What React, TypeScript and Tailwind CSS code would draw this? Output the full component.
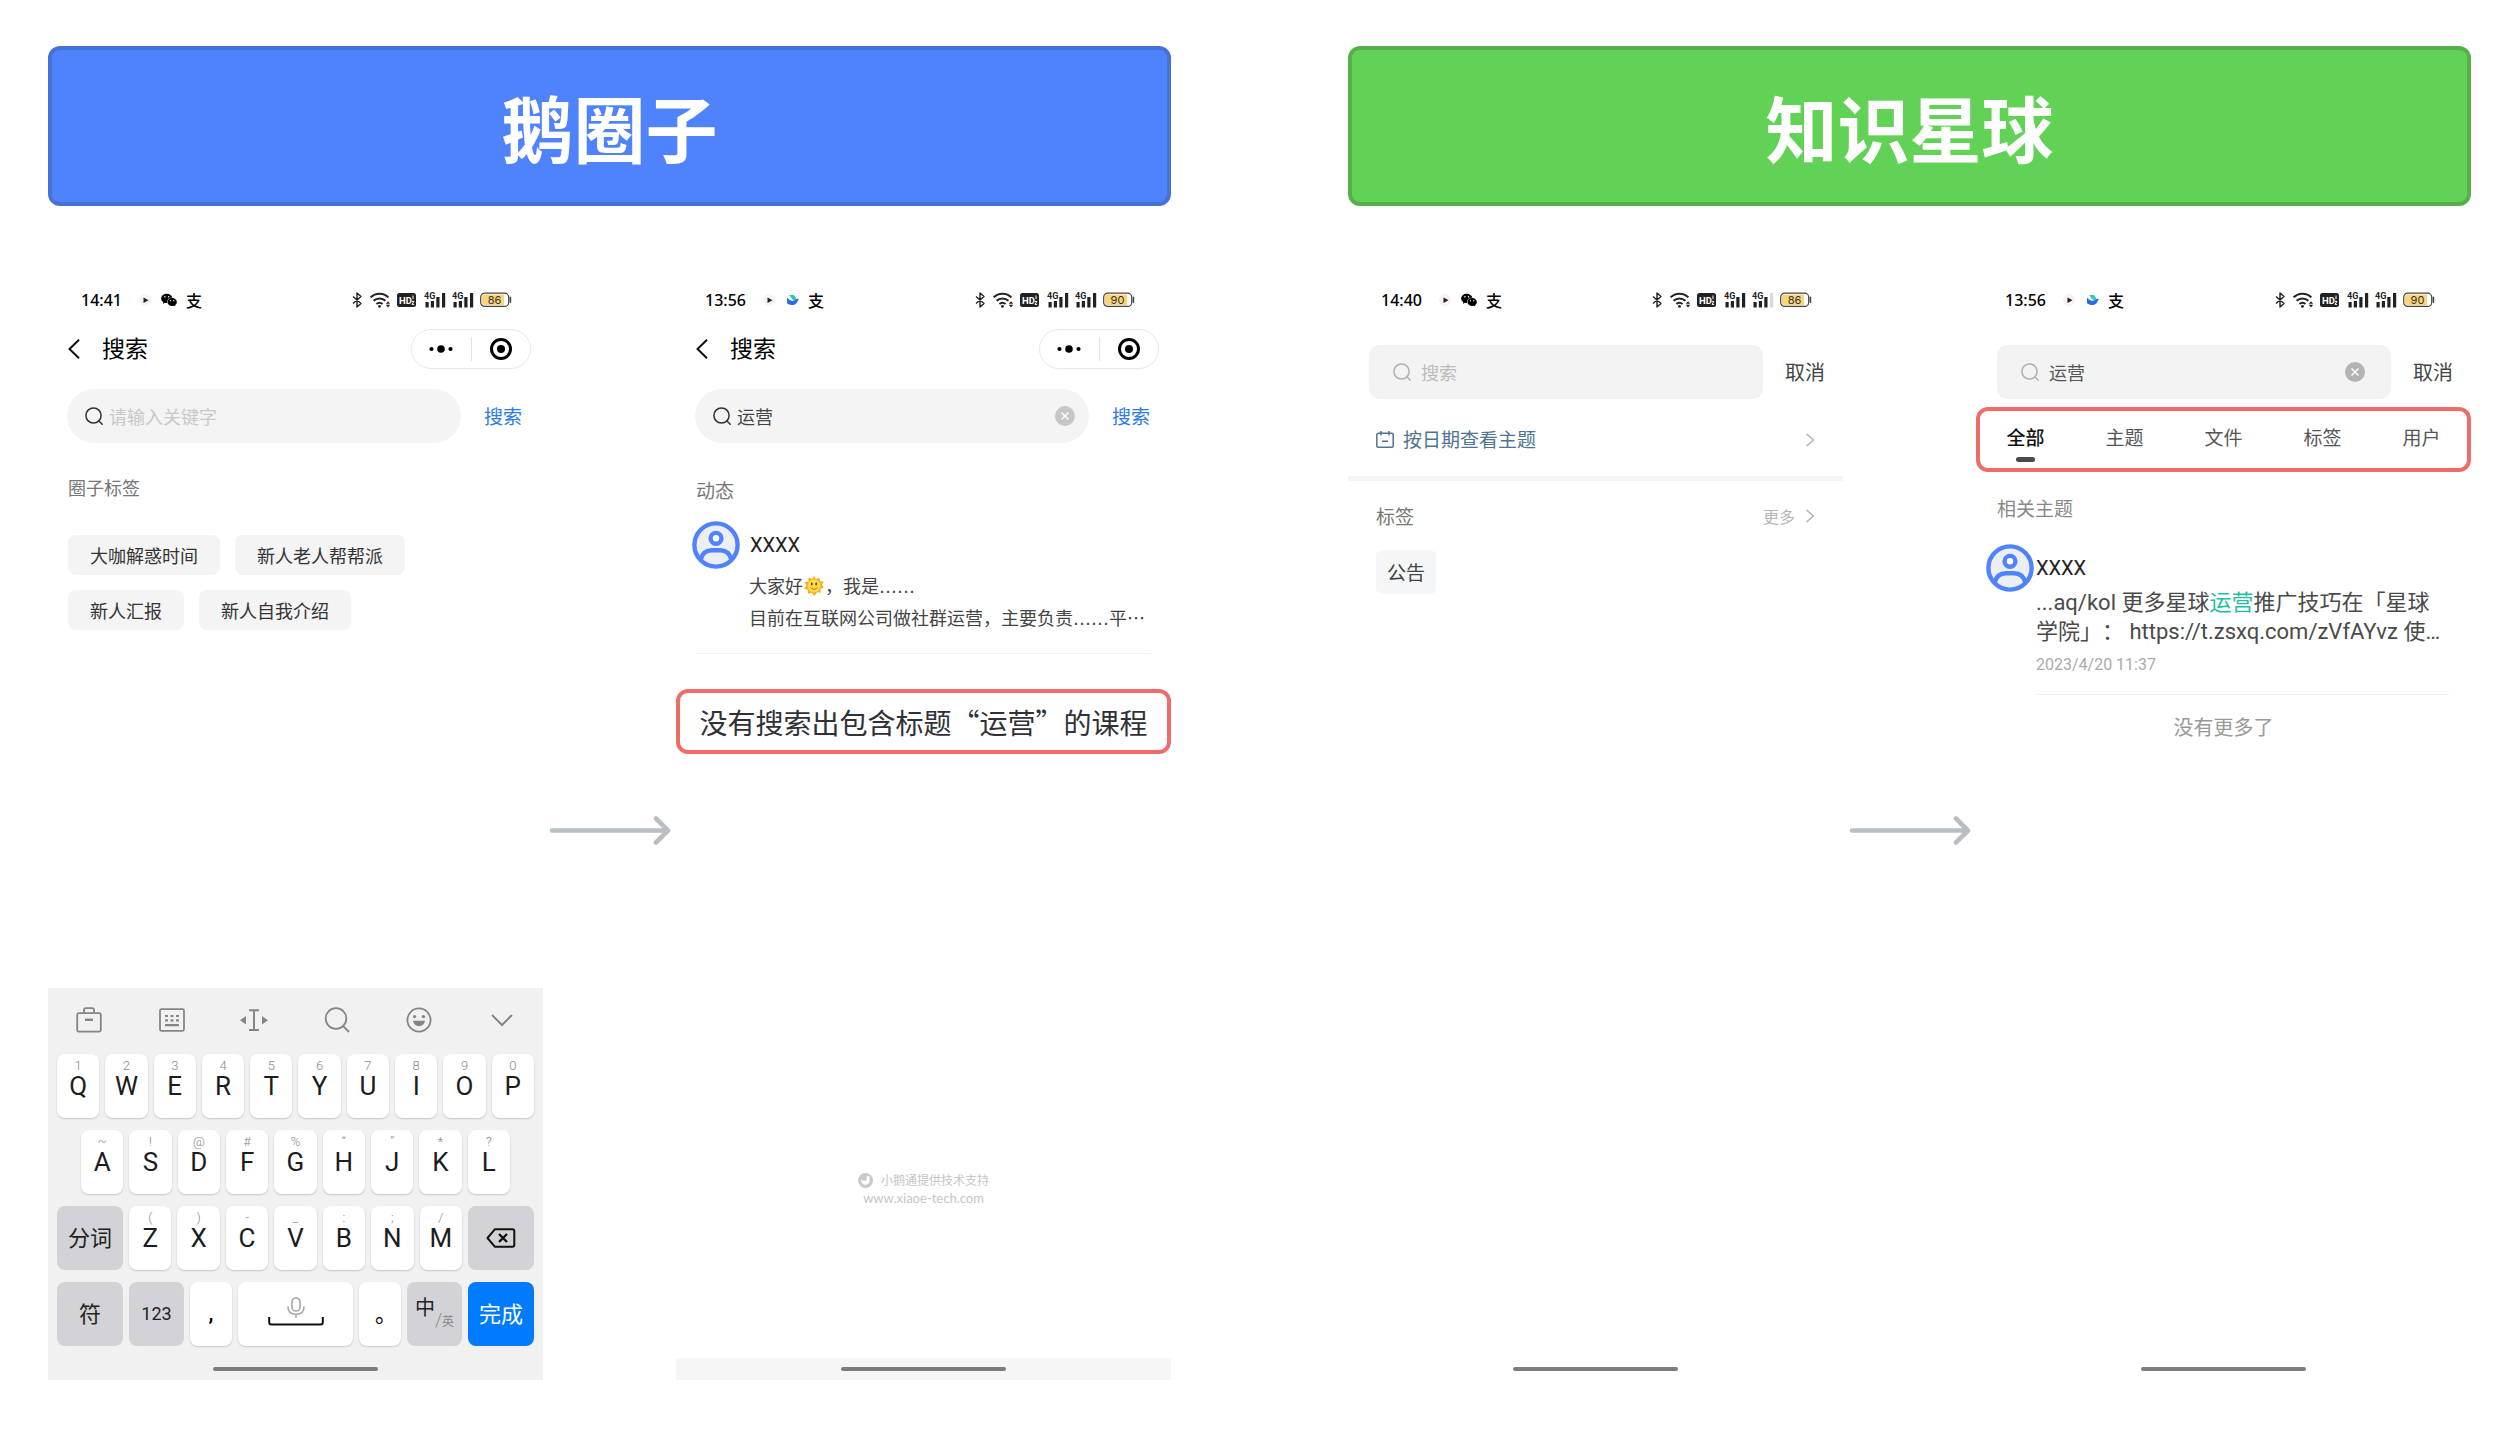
import type { ReactNode } from "react";
import { AiFillWechat } from "react-icons/ai";

/* ---------- Ikon status bar ---------- */

function Bluetooth() {
    return (
        <svg width="10" height="16" viewBox="0 0 10 16" fill="none" stroke="#222" strokeWidth="1.4" strokeLinejoin="round" aria-hidden="true">
            <path d="M1 4.5l8 7-4 3.5V1l4 3.5-8 7" />
        </svg>
    );
}

function Wifi() {
    return (
        <svg width="21" height="16" viewBox="0 0 21 16" fill="none" stroke="#222" strokeWidth="2" aria-hidden="true">
            <path d="M0.600 5.400a12.400 12.400 0 0 1 17.800 0" />
            <path d="M3.600 8.800a8.400 8.400 0 0 1 11.800 0" />
            <path d="M6.400 12a4.800 4.800 0 0 1 6.200 0" />
            <circle cx="9.500" cy="14.400" r="1.400" fill="#222" stroke="none" />
            <path d="M18 9.200l2.200 2.600h-4.400zM18 15.400l2.200-2.600h-4.400z" fill="#222" stroke="none" />
        </svg>
    );
}

function HdBadge() {
    return (
        <svg width="19" height="14" viewBox="0 0 19 14" aria-hidden="true">
            <rect width="19" height="14" rx="2.5" fill="#222" />
            <text x="2" y="10.6" fontSize="9.500" fontWeight="700" fill="#fff" fontFamily="Roboto, sans-serif">HD</text>
            <path d="M16 2.500v3.600M15 8.400h2l-2 3h2.200" stroke="#fff" strokeWidth="1" fill="none" />
        </svg>
    );
}

function Signal({ weak = false }: { weak?: boolean }) {
    return (
        <svg width="22" height="16" viewBox="0 0 22 16" fill="#222" aria-hidden="true">
            <text x="0" y="7.400" fontSize="9" fontWeight="700" fontFamily="Roboto, sans-serif">4G</text>
            <rect x="1.500" y="10" width="3.200" height="5.500" />
            <rect x="6.800" y="9" width="3.200" height="6.500" />
            <rect x="12.300" y="5" width="3.200" height="10.500" />
            <rect x="18" y="1" width="3.200" height="14.500" fill={weak ? "#d9d9d9" : "#222"} />
        </svg>
    );
}

function Battery({ level }: { level: string }) {
    return (
        <svg width="32" height="16" viewBox="0 0 32 16" aria-label={`${level}%`}>
            <rect x="0.7" y="1.2" width="28" height="13.2" rx="4" fill="#fff" stroke="#444" strokeWidth="1.2" />
            <path d="M5 2.6h19v10.4H5a3 3 0 0 1-3-3V5.600a3 3 0 0 1 3-3z" fill="#fbd479" />
            <path d="M30.4 5.400v4.800" stroke="#444" strokeWidth="1.600" strokeLinecap="round" />
            <text x="14.500" y="12" fontSize="11" textAnchor="middle" fill="#333" fontFamily="Inter, sans-serif">{level}</text>
        </svg>
    );
}

function BirdApp() {
    return (
        <svg width="14" height="14" viewBox="0 0 14 14" aria-hidden="true">
            <path d="M3 2h4.500c1.500 1 2.300 2.300 2.800 4L7.800 8z" fill="#2fc9b4" />
            <path d="M1 4.500C3 7 5.500 8.300 8 7.800c1.500-1.800 3.200-2.400 5-1.800-1 1-1.300 2.500-2.200 3.800C8.600 13 4 12.600 1 10.300z" fill="#2a6be8" />
        </svg>
    );
}

type StatusProps = { time: string; level: string; app: "wechat" | "bird"; weak?: boolean };

function StatusBar({ time, level, app, weak }: StatusProps) {
    return (
        <div className={`flex h-10 items-center justify-between ${app === "wechat" ? "pl-[33px] pr-[31px]" : "pl-[29px] pr-9"}`}>
            <div className="flex items-center">
                <span className="text-base font-medium text-black [font-family:'Noto_Sans',sans-serif]">{time}</span>
                <svg className="ml-4" width="14" height="14" viewBox="0 0 14 14" aria-hidden="true">
                    <circle cx="7" cy="7" r="6" fill="#fbf1f3" />
                    <path d="M5.500 4.500l5 2.800-5 2.700z" fill="#222" />
                </svg>
                {app === "wechat" ? (
                    <AiFillWechat className="ml-2 size-[18px] text-black" />
                ) : (
                    <span className="ml-[10px]"><BirdApp /></span>
                )}
                <span className="ml-2 text-base leading-4 font-medium text-black">支</span>
            </div>
            <div className="flex items-center">
                <Bluetooth />
                <span className="ml-2"><Wifi /></span>
                <span className="ml-[6px]"><HdBadge /></span>
                <span className="ml-2"><Signal /></span>
                <span className="ml-[6px]"><Signal weak={weak} /></span>
                <span className="ml-[6px]"><Battery level={level} /></span>
            </div>
        </div>
    );
}

/* ---------- Ikon umum ---------- */

function SearchIcon({ className, size = 18 }: { className?: string; size?: number }) {
    return (
        <svg className={className} width={size} height={size} viewBox="0 0 18 18" fill="none" stroke="currentColor" strokeWidth="1.500" strokeLinecap="round" aria-hidden="true">
            <circle cx="8.500" cy="8.500" r="7.600" />
            <path d="M14 14l3.200 3.200" />
        </svg>
    );
}

function Chevron() {
    return (
        <svg width="10" height="14" viewBox="0 0 10 14" fill="none" stroke="#b5b5b5" strokeWidth="1.600" aria-hidden="true">
            <path d="M1.500 1l7 6-7 6" />
        </svg>
    );
}

function ClearButton({ className }: { className: string }) {
    return (
        <button type="button" aria-label="清除" className={`shrink-0 ${className}`}>
            <svg width="20" height="20" viewBox="0 0 20 20" aria-hidden="true">
                <circle cx="10" cy="10" r="10" fill="currentColor" />
                <path d="M6.500 6.500l7 7M13.500 6.500l-7 7" stroke="#fff" strokeWidth="1.400" />
            </svg>
        </button>
    );
}

function Avatar() {
    return (
        <svg className="shrink-0" width="48" height="48" viewBox="0 0 48 48" fill="none" stroke="#4f83fe" strokeWidth="4.400" aria-hidden="true">
            <circle cx="24" cy="24" r="21.600" fill="#eceef4" />
            <circle cx="24" cy="17.300" r="5.400" fill="#fff" />
            <path d="M8.500 39C10 32.500 14 29.200 20 29.200h8c6 0 10 3.300 11.500 9.800" />
        </svg>
    );
}

function SunFace() {
    return (
        <svg className="mx-px inline-block align-[-3px]" width="20" height="20" viewBox="0 0 20 20" aria-label="太阳">
            <path d="M10 0l2 3.200L15.500 1.600 16 5.300l3.800.2-2 3.200L20 11.300l-3.500 1.600.2 3.800-3.600-.5L10.500 20l-2.700-3.200-3.700 1-.2-3.800L0 12.400l2.400-2.900L.6 6.100l3.700-.7.2-3.800L8 3z" fill="#f6b022" />
            <circle cx="10" cy="9.800" r="6.400" fill="#fddc4b" />
            <ellipse cx="7.800" cy="8" rx="0.900" ry="1.400" fill="#5a3a10" />
            <ellipse cx="12.200" cy="8" rx="0.900" ry="1.400" fill="#5a3a10" />
            <path d="M6.500 11.500c1.800 2.200 5.200 2.200 7 0" stroke="#b5701a" strokeWidth="1" fill="none" />
        </svg>
    );
}

/* ---------- Bagian layar ---------- */

function Phone({ children }: { children: ReactNode }) {
    return <section className="flex aspect-[9/20] min-w-0 flex-1 flex-col">{children}</section>;
}

function HomeIndicator({ className = "" }: { className?: string }) {
    return (
        <div className={`flex justify-center py-[9px] ${className}`}>
            <span className="h-1 w-1/3 rounded-full bg-[#7d7d7d]" />
        </div>
    );
}

function MiniProgramNav() {
    return (
        <div className="flex h-[58px] items-center pr-3 pl-5">
            <button type="button" aria-label="返回" className="w-[34px]">
                <svg width="12" height="20" viewBox="0 0 12 20" fill="none" stroke="#111" strokeWidth="2" aria-hidden="true">
                    <path d="M11 0.700L1.500 10l9.500 9.300" />
                </svg>
            </button>
            <h2 className="flex-1 pb-[3px] text-[23px] text-black">搜索</h2>
            <div className="flex h-10 w-[120px] items-center rounded-full border border-[#e8e8e8]">
                <button type="button" aria-label="更多" className="flex flex-1 justify-center">
                    <svg width="24" height="8" viewBox="0 0 24 8" aria-hidden="true">
                        <circle cx="2.500" cy="4" r="2.100" />
                        <circle cx="12" cy="4" r="3.800" />
                        <circle cx="21.500" cy="4" r="2.100" />
                    </svg>
                </button>
                <span className="h-6 w-px bg-[#e2e2e2]" />
                <button type="button" aria-label="关闭" className="flex flex-1 justify-center">
                    <svg width="22" height="22" viewBox="0 0 22 22" aria-hidden="true">
                        <circle cx="11" cy="11" r="9.500" fill="none" stroke="#000" strokeWidth="3" />
                        <circle cx="11" cy="11" r="4" />
                    </svg>
                </button>
            </div>
        </div>
    );
}

function GooseSearch({ value }: { value?: string }) {
    return (
        <div className="mt-[11px] flex items-center pr-[21px] pl-[19px]">
            <label className="flex h-[54px] min-w-0 flex-1 items-center rounded-full bg-[#f4f4f4] pr-[14px] pl-[18px]">
                <SearchIcon className="shrink-0 text-[#333]" />
                <input
                    type="text"
                    aria-label="搜索关键字"
                    defaultValue={value}
                    placeholder="请输入关键字"
                    className="ml-[6px] min-w-0 flex-1 bg-transparent text-lg text-[#444] outline-none placeholder:text-[#c8c8c8]"
                />
                {value && <ClearButton className="text-[#c6c6c6]" />}
            </label>
            <button type="button" className="ml-[23px] text-[19px] text-[#2e7be6]">搜索</button>
        </div>
    );
}

function PlanetSearch({ value }: { value?: string }) {
    return (
        <div className="mt-[25px] flex items-center pr-[18px] pl-[21px]">
            <label className="flex h-[54px] min-w-0 flex-1 items-center rounded-[10px] bg-[#f3f3f3] pr-[26px] pl-6">
                <SearchIcon className="shrink-0 text-[#b0b0b0]" />
                <input
                    type="text"
                    aria-label="搜索"
                    defaultValue={value}
                    placeholder="搜索"
                    className="ml-[10px] min-w-0 flex-1 bg-transparent text-lg text-[#555] outline-none placeholder:text-[#bbb]"
                />
                {value && <ClearButton className="text-[#b3b3b3]" />}
            </label>
            <button type="button" className="ml-[22px] text-xl text-[#444]">取消</button>
        </div>
    );
}

/* ---------- Keyboard ---------- */

const row1 = [["Q", "1"], ["W", "2"], ["E", "3"], ["R", "4"], ["T", "5"], ["Y", "6"], ["U", "7"], ["I", "8"], ["O", "9"], ["P", "0"]];
const row2 = [["A", "~"], ["S", "!"], ["D", "@"], ["F", "#"], ["G", "%"], ["H", "“"], ["J", "”"], ["K", "*"], ["L", "?"]];
const row3 = [["Z", "("], ["X", ")"], ["C", "-"], ["V", "_"], ["B", ":"], ["N", ";"], ["M", "/"]];

const white = "rounded-lg bg-white shadow-[0_1px_2px_rgba(0,0,0,0.18)]";
const gray = "rounded-lg bg-[#d2d2d7] text-[#222]";

function LetterKey({ letter, hint }: { letter: string; hint: string }) {
    return (
        <button type="button" className={`relative h-16 min-w-0 flex-1 text-[26px] text-[#1c1c1c] ${white}`}>
            <span className="absolute inset-x-0 top-1 text-[13px] leading-4 font-light text-[#888]">{hint}</span>
            {letter}
        </button>
    );
}

function Keyboard() {
    return (
        <div className="mt-auto bg-[#f1f1f1] [font-family:Roboto,'Noto_Sans_CJK_SC',sans-serif]">
            <div className="grid h-[66px] grid-cols-6 place-items-center pb-[2px] text-[#858585]">
                <button type="button" aria-label="剪贴板">
                    <svg width="26" height="26" viewBox="0 0 26 26" fill="none" stroke="currentColor" strokeWidth="1.800" aria-hidden="true">
                        <rect x="1.200" y="6.200" width="23.600" height="18.400" rx="1.500" />
                        <path d="M8 6V3.200C8 2 8.800 1.200 10 1.200h6c1.200 0 2 .8 2 2V6" />
                        <path d="M9 12.800h8" strokeWidth="2.400" />
                    </svg>
                </button>
                <button type="button" aria-label="键盘">
                    <svg width="26" height="26" viewBox="0 0 26 26" fill="none" stroke="currentColor" strokeWidth="1.800" aria-hidden="true">
                        <rect x="1" y="2.200" width="24" height="21.600" rx="1.500" />
                        <path d="M6 9h3M11.500 9h3M17 9h3M6 13.400h3M11.500 13.400h3M17 13.400h3M6 18.200h14" strokeWidth="2.200" />
                    </svg>
                </button>
                <button type="button" aria-label="光标">
                    <svg width="30" height="26" viewBox="0 0 30 26" fill="none" stroke="currentColor" strokeWidth="2" aria-hidden="true">
                        <path d="M10 3.200h10M15 3v20M10 23h10" />
                        <path d="M7 9v8.500L1 13.200zM23 9v8.500l6-4.300z" fill="currentColor" stroke="none" />
                    </svg>
                </button>
                <button type="button" aria-label="查找">
                    <svg width="26" height="26" viewBox="0 0 26 26" fill="none" stroke="currentColor" strokeWidth="1.800" aria-hidden="true">
                        <circle cx="12" cy="11.500" r="10.300" />
                        <path d="M18.600 18.600l6.400 6.400" />
                    </svg>
                </button>
                <button type="button" aria-label="表情">
                    <svg width="26" height="26" viewBox="0 0 26 26" fill="none" stroke="currentColor" strokeWidth="1.800" aria-hidden="true">
                        <circle cx="13" cy="13" r="11.600" />
                        <circle cx="8.600" cy="9.600" r="1.700" fill="currentColor" stroke="none" />
                        <circle cx="17.400" cy="9.600" r="1.700" fill="currentColor" stroke="none" />
                        <path d="M7 13.800h12c-.5 3.400-2.800 5.400-6 5.400s-5.500-2-6-5.400z" fill="currentColor" stroke="none" />
                    </svg>
                </button>
                <button type="button" aria-label="收起键盘">
                    <svg width="22" height="14" viewBox="0 0 22 14" fill="none" stroke="currentColor" strokeWidth="2" aria-hidden="true">
                        <path d="M1 2l10 10L21 2" />
                    </svg>
                </button>
            </div>

            <div className="flex flex-col gap-3">
                <div className="flex gap-[6px] px-[9px]">
                    {row1.map(([letter, hint]) => <LetterKey key={letter} letter={letter} hint={hint} />)}
                </div>
                <div className="flex gap-[6px] px-[33px]">
                    {row2.map(([letter, hint]) => <LetterKey key={letter} letter={letter} hint={hint} />)}
                </div>
                <div className="flex gap-[6px] px-[9px]">
                    <button type="button" className={`h-16 w-[66px] text-[22px] ${gray}`}>分词</button>
                    {row3.map(([letter, hint]) => <LetterKey key={letter} letter={letter} hint={hint} />)}
                    <button type="button" aria-label="删除" className={`flex h-16 w-[66px] items-center justify-center ${gray}`}>
                        <svg width="30" height="20" viewBox="0 0 30 20" fill="none" stroke="#111" strokeWidth="2" strokeLinejoin="round" aria-hidden="true">
                            <path d="M9 1.200h17.500c1.200 0 1.800.6 1.800 1.800v14c0 1.200-.6 1.800-1.800 1.800H9L1.500 10z" />
                            <path d="M13 6l8 8M21 6l-8 8" strokeWidth="2.400" />
                        </svg>
                    </button>
                </div>
                <div className="flex gap-[6px] px-[9px]">
                    <button type="button" className={`h-16 w-[66px] text-[22px] ${gray}`}>符</button>
                    <button type="button" className={`h-16 w-[55px] text-lg ${gray}`}>123</button>
                    <button type="button" className={`h-16 w-[42px] pb-px text-[22px] font-medium ${white}`}>,</button>
                    <button type="button" aria-label="空格" className={`flex h-16 flex-1 items-center justify-center pb-1 ${white}`}>
                        <svg width="56" height="30" viewBox="0 0 56 30" fill="none" aria-hidden="true">
                            <g stroke="#a6a6a6" strokeWidth="1.600">
                                <rect x="24" y="1" width="8" height="13" rx="4" />
                                <path d="M20 9.500c0 5 3.200 7.700 8 7.700s8-2.700 8-7.700M28 17v4" />
                            </g>
                            <path d="M1.200 20v5.200c0 1.500.7 2.200 2.200 2.200h49.200c1.500 0 2.200-.7 2.200-2.200V20" stroke="#111" strokeWidth="2" />
                        </svg>
                    </button>
                    <button type="button" className={`h-16 w-[42px] pl-3 text-[22px] ${white}`}>。</button>
                    <button type="button" className={`flex h-16 w-[55px] items-center justify-center ${gray}`}>
                        <span className="pb-3 text-xl">中</span>
                        <span className="pt-3 text-lg font-light text-[#888]">/</span>
                        <span className="pt-4 text-xs text-[#888]">英</span>
                    </button>
                    <button type="button" className="h-16 w-[66px] rounded-lg bg-[#007bff] text-[22px] text-white">完成</button>
                </div>
            </div>
            <HomeIndicator className="mt-3" />
        </div>
    );
}

/* ---------- Empat layar ---------- */

const tags = ["大咖解惑时间", "新人老人帮帮派", "新人汇报", "新人自我介绍"];
const tabs = ["全部", "主题", "文件", "标签", "用户"];

function GooseHome() {
    return (
        <Phone>
            <StatusBar time="14:41" level="86" app="wechat" />
            <MiniProgramNav />
            <GooseSearch />
            <h3 className="mt-8 px-5 text-lg leading-6 text-[#777]">圈子标签</h3>
            <div className="mt-9 flex flex-wrap gap-[15px] pr-[100px] pl-5">
                {tags.map((tag) => (
                    <button key={tag} type="button" className="h-10 rounded-lg bg-[#f4f4f4] px-[22px] text-lg text-[#333]">{tag}</button>
                ))}
            </div>
            <Keyboard />
        </Phone>
    );
}

function LowDots() {
    return <span className="leading-none [font-family:'DejaVu_Sans',sans-serif]">……</span>;
}

function GooseResult() {
    return (
        <Phone>
            <StatusBar time="13:56" level="90" app="bird" />
            <MiniProgramNav />
            <GooseSearch value="运营" />
            <h3 className="mt-[35px] px-5 text-[19px] leading-6 text-[#777]">动态</h3>
            <article className="mt-[19px]">
                <div className="flex items-center gap-[10px] pl-4">
                    <Avatar />
                    <span className="text-xl text-[#222] [font-family:Roboto,sans-serif]">XXXX</span>
                </div>
                <div className="pl-[73px] text-lg leading-8 whitespace-nowrap text-[#444]">
                    <p>大家好<SunFace />，我是<LowDots /></p>
                    <p>目前在互联网公司做社群运营，主要负责<LowDots />平…</p>
                </div>
            </article>
            <hr className="mx-5 mt-5 border-[#f2f2f2]" />
            <p className="mt-[35px] flex h-[65px] items-center justify-center rounded-xl border-4 border-[#ef6c6a] text-[28px] whitespace-nowrap text-[#2f3136]">
                没有搜索出包含标题“运营”的课程
            </p>
            <footer className="mt-auto mb-[151px] text-center text-xs leading-[18px] text-[#c6c6c6]">
                <p className="flex items-center justify-center gap-2">
                    <svg width="15" height="15" viewBox="0 0 15 15" aria-hidden="true">
                        <circle cx="7.500" cy="7.500" r="7.500" fill="#c9c9c9" />
                        <path d="M3 6.500c2 1.600 4.300 1.600 5.600.4V3.200h3v4.600c0 2.400-1.800 4-4.200 4S3 10 3 6.500z" fill="#fff" />
                    </svg>
                    小鹅通提供技术支持
                </p>
                <a href="#xiaoe" className="block text-[13px] [font-family:Lato,sans-serif]">www.xiaoe-tech.com</a>
            </footer>
            <HomeIndicator className="bg-[#f6f6f6]" />
        </Phone>
    );
}

function PlanetHome() {
    return (
        <Phone>
            <StatusBar time="14:40" level="86" app="wechat" weak />
            <PlanetSearch />
            <button type="button" className="flex h-[77px] items-center pt-1 pr-7 pl-7 text-[19px] text-[#4f7390]">
                <svg width="18" height="18" viewBox="0 0 18 18" fill="none" stroke="currentColor" strokeWidth="1.500" aria-hidden="true">
                    <rect x="0.800" y="2.300" width="16.400" height="14" rx="1.500" />
                    <path d="M5 0v4.500M13 0v4.500M6 10.300h6" />
                </svg>
                <span className="ml-[9px] flex-1 text-left">按日期查看主题</span>
                <Chevron />
            </button>
            <div className="h-[5px] bg-[#f4f6f6]" />
            <div className="mt-[23px] flex items-center justify-between px-7 leading-6">
                <h3 className="text-[19px] text-[#777]">标签</h3>
                <a href="#tags" className="flex items-center gap-[10px] text-base text-[#b5b5b5]">更多<Chevron /></a>
            </div>
            <button type="button" className="mt-[22px] ml-7 h-11 self-start rounded-md bg-[#f5f6f8] px-[11px] text-[19px] text-[#444]">公告</button>
            <HomeIndicator className="mt-auto" />
        </Phone>
    );
}

function PlanetResult() {
    return (
        <Phone>
            <StatusBar time="13:56" level="90" app="bird" />
            <PlanetSearch value="运营" />
            <nav className="mt-2 grid h-[65px] grid-cols-5 rounded-xl ring-4 ring-[#ef6c6a] ring-inset">
                {tabs.map((tab, i) => (
                    <button
                        key={tab}
                        type="button"
                        className={`flex flex-col items-center pt-[18px] text-[19px] leading-6 ${i === 0 ? "font-medium text-[#111]" : "text-[#555]"}`}
                    >
                        {tab}
                        {i === 0 && <span className="mt-2 h-[5px] w-[19px] rounded-full bg-[#4a4a4a]" />}
                    </button>
                ))}
            </nav>
            <h3 className="mt-6 px-[21px] text-[19px] leading-6 text-[#888]">相关主题</h3>
            <article className="mt-6 flex gap-[2px] pl-[10px] [font-family:Roboto,'Noto_Sans_CJK_SC',sans-serif]">
                <Avatar />
                <div className="mr-[22px] flex-1 border-b border-[#efefef] pb-[17px]">
                    <div className="flex h-11 items-center pt-1 text-xl text-[#222]">XXXX</div>
                    <p className="text-[22px] leading-[29px] whitespace-nowrap text-[#4a4a4a] [text-spacing-trim:space-all]">
                        ...aq/kol 更多星球<em className="text-[#1fc0a0] not-italic">运营</em>推广技巧在「星球
                        <br />
                        学院」： https://t.zsxq.com/zVfAYvz 使…
                    </p>
                    <time className="mt-[7px] block text-base leading-6 text-[#aaa]">2023/4/20 11:37</time>
                </div>
            </article>
            <p className="mt-5 text-center text-xl leading-6 text-[#999]">没有更多了</p>
            <HomeIndicator className="mt-auto" />
        </Phone>
    );
}

function Arrow() {
    return (
        <div className="flex w-[133px] shrink-0 items-center justify-center">
            <svg width="122" height="30" viewBox="0 0 122 30" fill="none" stroke="#b9bec4" strokeWidth="4.600" strokeLinecap="round" strokeLinejoin="round" aria-hidden="true">
                <path d="M3 15.500h116M107 3.500l12 12-12 12" />
            </svg>
        </div>
    );
}

function Column({ title, color, children }: { title: string; color: string; children: ReactNode }) {
    return (
        <div>
            <h1 className={`flex h-40 items-center justify-center rounded-xl border-4 text-7xl font-bold text-white ${color}`}>{title}</h1>
            <div className="mt-[74px] flex">{children}</div>
        </div>
    );
}

export default function App() {
    return (
        <main lang="zh-CN" className="grid min-h-screen grid-cols-2 gap-[177px] bg-white pt-[46px] pr-[49px] pb-12 pl-12 [font-family:'Noto_Sans_CJK_SC',sans-serif]">
            <Column title="鹅圈子" color="border-[#4672d6] bg-[#4e83fd]">
                <GooseHome />
                <Arrow />
                <GooseResult />
            </Column>
            <Column title="知识星球" color="border-[#55b04a] bg-[#62d256]">
                <PlanetHome />
                <Arrow />
                <PlanetResult />
            </Column>
        </main>
    );
}
